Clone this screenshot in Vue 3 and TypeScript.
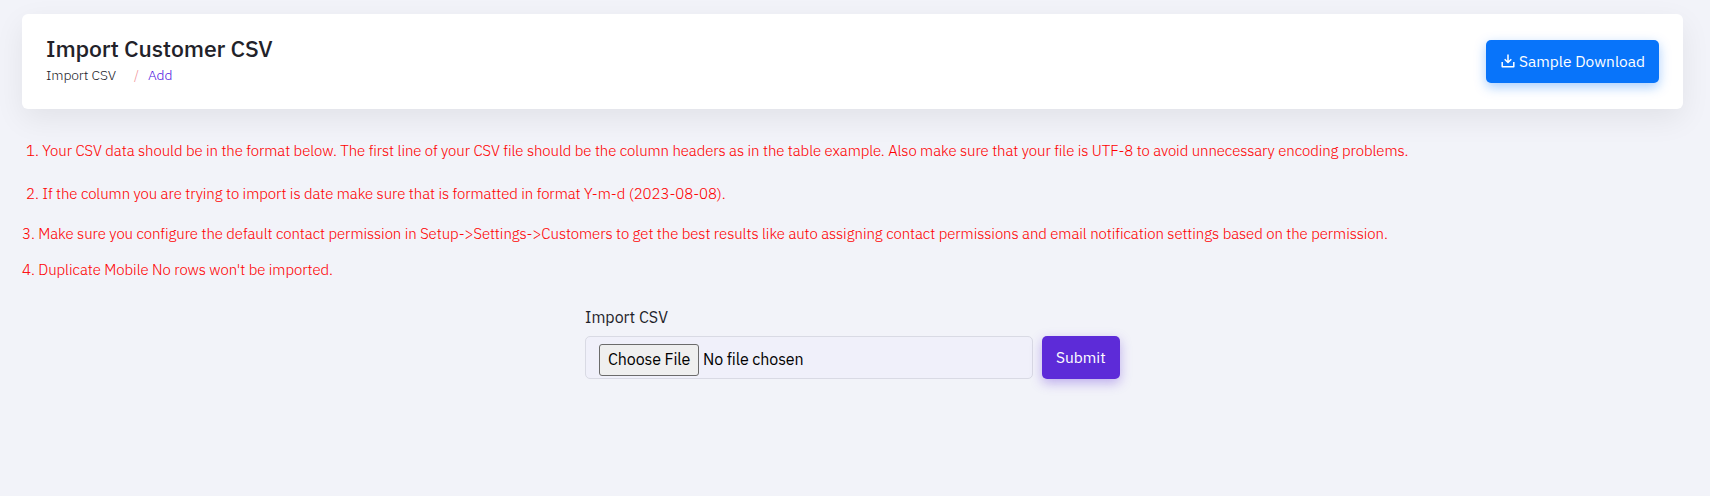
<script setup lang="ts">
interface Note {
  text: string
  kind: string
}

const notes: Note[] = [
  { kind: 'first', text: '1. Your CSV data should be in the format below. The first line of your CSV file should be the column headers as in the table example. Also make sure that your file is UTF-8 to avoid unnecessary encoding problems.' },
  { kind: 'second', text: '2. If the column you are trying to import is date make sure that is formatted in format Y-m-d (2023-08-08).' },
  { kind: 'third', text: '3. Make sure you configure the default contact permission in Setup->Settings->Customers to get the best results like auto assigning contact permissions and email notification settings based on the permission.' },
  { kind: 'fourth', text: "4. Duplicate Mobile No rows won't be imported." },
]
</script>

<template>
  <main class="page">
    <header class="card">
      <div>
        <h1 class="title">Import Customer CSV</h1>
        <nav class="crumbs">
          <span class="crumb">Import CSV</span>
          <span class="slash">/</span>
          <a class="current">Add</a>
        </nav>
      </div>
      <button class="btn download" type="button">
        <svg class="icon" viewBox="0 0 14 14" width="14" height="14" fill="none" stroke="currentColor" stroke-width="1.5">
          <path d="M1.2 8v4.7h11.6V8" stroke-linejoin="round" />
          <path d="M7 0.6v7.4M3.7 5.2 7 8.5l3.3-3.3" />
        </svg>
        <span>Sample Download</span>
      </button>
    </header>

    <section class="notes">
      <p v-for="note in notes" :key="note.kind" class="note" :class="note.kind">{{ note.text }}</p>
    </section>

    <form class="form" @submit.prevent>
      <div class="field">
        <label class="label">Import CSV</label>
        <div class="input">
          <button class="choose" type="button">Choose File</button>
          <span class="status">No file chosen</span>
        </div>
      </div>
      <button class="btn submit" type="submit">Submit</button>
    </form>
  </main>
</template>

<style>
html,
body {
  margin: 0;
  background: #f2f3f9;
}
</style>

<style scoped>
.page {
  box-sizing: border-box;
  height: 496px;
  padding: 14px 27px 0 22px;
  overflow: hidden;
  background: #f2f3f9;
  font-family: 'IBM Plex Sans', Roboto, 'Liberation Sans', sans-serif;
  color: #1f1f2b;
}
.card {
  box-sizing: border-box;
  display: flex;
  justify-content: space-between;
  height: 95px;
  padding: 19px 24px 0;
  border-radius: 6px;
  background: #fff;
  box-shadow: 0 10px 30px rgba(20, 10, 0, 0.07);
}
.title {
  margin: 0;
  font-size: 23px;
  line-height: 30px;
  font-weight: 500;
  letter-spacing: -0.14px;
  color: #222229;
}
.crumbs {
  display: flex;
  margin-top: 1px;
  font-size: 14px;
  line-height: 22px;
  font-weight: 300;
  letter-spacing: -0.15px;
  color: #222229;
}
.crumb {
  width: 88px;
}
.slash {
  width: 14px;
  color: #f08f96;
}
.current {
  color: #5016e0;
}
.btn {
  display: flex;
  box-sizing: border-box;
  align-items: center;
  height: 43px;
  border: 0;
  border-radius: 5px;
  color: #fff;
  font-family: inherit;
  font-size: 15.5px;
  line-height: 22px;
  white-space: nowrap;
}
.download {
  width: 173px;
  margin-top: 7px;
  padding: 0 0 2px 15px;
  background: #0874fa;
  box-shadow: 0 4px 12px rgba(8, 116, 250, 0.35);
}
.icon {
  margin: 1px 4px 0 0;
}
.notes {
  padding-top: 30px;
}
.note {
  margin: 0;
  font-size: 15px;
  font-weight: 300;
  line-height: 24px;
  letter-spacing: -0.073px;
  white-space: nowrap;
  color: #f00;
  -webkit-text-stroke: 0.06px;
}
.third,
.fourth {
  letter-spacing: -0.067px;
}
.first,
.second {
  padding-left: 4px;
}
.first {
  height: 43px;
}
.second {
  height: 40px;
}
.third {
  height: 36px;
}
.fourth {
  height: 35px;
}
.form {
  display: flex;
  align-items: flex-end;
  width: 535px;
  margin: 13px 0 0 563px;
  gap: 9px;
}
.field {
  width: 448px;
}
.label {
  display: block;
  height: 30px;
  font-size: 16px;
  line-height: 22px;
}
.input {
  box-sizing: border-box;
  display: flex;
  height: 43px;
  padding: 7px 13px 0;
  border: 1px solid #d9dae4;
  border-radius: 5px;
  background: #f0f0fa;
}
.choose {
  box-sizing: border-box;
  width: 100px;
  height: 32px;
  padding: 0 0 2px 8px;
  border: 1px solid #6b6b6b;
  border-radius: 3px;
  background: #efefef;
  color: #000;
  font: inherit;
  font-size: 16px;
  line-height: 28px;
  letter-spacing: -0.1px;
  text-align: left;
  white-space: nowrap;
}
.status {
  margin-left: 4px;
  font-size: 16px;
  line-height: 30px;
  letter-spacing: -0.1px;
  color: #000;
}
.submit {
  width: 78px;
  padding: 0 0 2px 14px;
  background: #5d2bd8;
  box-shadow: 0 4px 12px rgba(93, 43, 216, 0.35);
}
</style>
